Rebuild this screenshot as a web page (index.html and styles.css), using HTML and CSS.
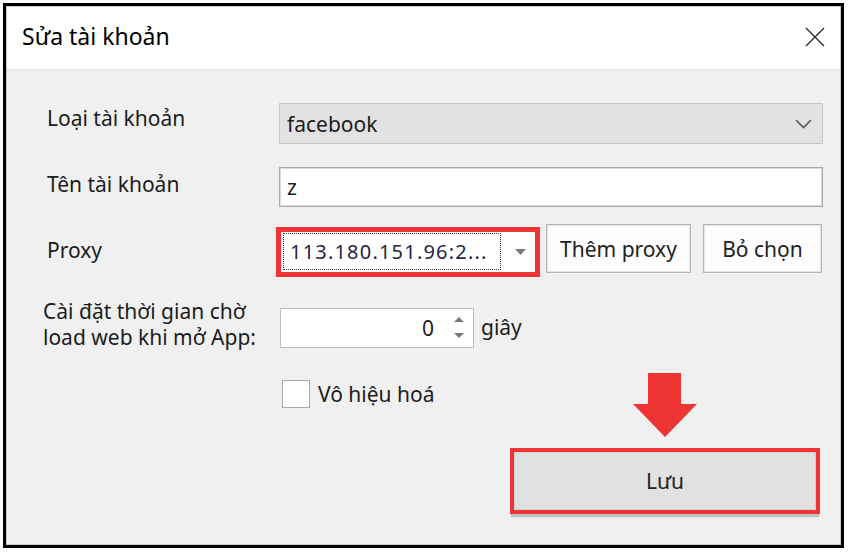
FILE: index.html
```html
<!DOCTYPE html>
<html lang="vi">

<head>
    <meta charset="UTF-8">
    <meta name="viewport" content="width=device-width, initial-scale=1.0">
    <title>Sửa tài khoản</title>
    <link rel="stylesheet" href="styles.css">
</head>

<body>
    <div class="frame">
        <div class="window">
            <div class="titlebar">
                <span class="title">Sửa tài khoản</span>
                <svg class="close" width="20" height="20" viewBox="0 0 20 20">
                    <path d="M1 1L19 19M19 1L1 19" stroke="#2b2b2b" stroke-width="1.4" fill="none" />
                </svg>
            </div>
            <div class="content">
                <div class="row row-type">
                    <span class="label label-type">Loại tài khoản</span>
                    <div class="combo">
                        <span>facebook</span>
                        <svg class="chevron" width="17" height="10" viewBox="0 0 17 10">
                            <path d="M1 1L8.5 8.5L16 1" stroke="#5a5a5a" stroke-width="1.6" fill="none" />
                        </svg>
                    </div>
                </div>
                <div class="row row-name">
                    <span class="label label-name">Tên tài khoản</span>
                    <div class="textbox">z</div>
                </div>
                <div class="row row-proxy">
                    <span class="label label-proxy">Proxy</span>
                    <div class="proxy-tools">
                        <div class="proxy-mark">
                            <div class="proxy-combo">
                                <span class="focus">113.180.151.96:2...</span>
                                <svg class="drop" width="11" height="6" viewBox="0 0 11 6">
                                    <path d="M0 0H11L5.5 6Z" fill="#7a7a7a" />
                                </svg>
                            </div>
                        </div>
                        <button class="btn btn-add">Thêm proxy</button>
                        <button class="btn btn-clear">Bỏ chọn</button>
                    </div>
                </div>
                <div class="row row-wait">
                    <span class="label label-wait">Cài đặt thời gian chờ<br>load web khi mở App:</span>
                    <div class="wait">
                        <div class="spin">
                            <span class="spin-value">0</span>
                            <svg class="spin-btns" width="12" height="24" viewBox="0 0 12 24">
                                <path d="M1 6L6 1L11 6Z" fill="#7a7a7a" />
                                <path d="M1 17L6 22L11 17Z" fill="#7a7a7a" />
                            </svg>
                        </div>
                        <span class="unit">giây</span>
                    </div>
                </div>
                <div class="bottom">
                    <div class="check">
                        <span class="box"></span>
                        <span>Vô hiệu hoá</span>
                    </div>
                    <div class="save-col">
                        <svg class="arrow" width="64" height="65" viewBox="0 0 64 65">
                            <polygon points="15,0 48,0 48,31 64,31 32,64 0,31 15,31" fill="#ef3434" />
                        </svg>
                        <div class="save-mark">
                            <button class="btn-save">Lưu</button>
                        </div>
                    </div>
                </div>
            </div>
        </div>
    </div>
</body>

</html>
```

FILE: styles.css
```css
body {
    margin: 0;
    padding: 0;
    background-color: #fff;
    font-family: "Noto Sans", "Open Sans", sans-serif;
    color: #1c1c1c;
}

.frame {
    margin: 3px 0 0 3px;
    width: 841px;
    height: 545px;
    box-sizing: border-box;
    border: 3px solid #000;
}

.window {
    height: 100%;
    box-sizing: border-box;
    border: 1px solid #c9c9c9;
    display: flex;
    flex-direction: column;
}

.titlebar {
    height: 62px;
    background-color: #fff;
    border-bottom: 1px solid #e3e3e3;
    display: flex;
    align-items: center;
    justify-content: space-between;
    padding: 0 15px 0 15px;
}

.title {
    font-size: 23px;
    color: #000;
    margin-top: -4px;
}

.close {
    display: block;
    margin-top: -2px;
}

.content {
    flex: 1;
    background-color: #f0f0f0;
    padding: 33px 17px 0 40px;
}

.row {
    display: grid;
    grid-template-columns: 232px 1fr;
    align-items: start;
}

.label {
    font-size: 21px;
    line-height: 25px;
}

.label-type {
    margin-top: 3px;
}

.label-name {
    margin-top: 5px;
}

.row-name {
    margin-top: 23px;
}

.row-proxy {
    margin-top: 17px;
}

.row-wait {
    margin-top: 22px;
}

.combo {
    height: 41px;
    box-sizing: border-box;
    background-color: #e2e2e2;
    border: 1px solid #c6c6c6;
    display: flex;
    align-items: center;
    justify-content: space-between;
    padding: 0 10px 0 7px;
    font-size: 21px;
}

.chevron {
    display: block;
}

.textbox {
    height: 40px;
    box-sizing: border-box;
    background-color: #fff;
    border: 1px solid #a9a9a9;
    box-shadow: inset 0 0 0 1px #dadada;
    padding: 0 7px;
    font-size: 21px;
    line-height: 38px;
}

.label-proxy {
    margin-top: 14px;
}

.proxy-tools {
    display: flex;
    align-items: flex-start;
}

.proxy-mark {
    margin: 3px 0 0 -3px;
    border: 5px solid #ee3434;
}

.proxy-combo {
    width: 254px;
    height: 40px;
    box-sizing: border-box;
    background-color: #fff;
    display: flex;
    align-items: center;
    padding: 1px 0 2px 2px;
}

.focus {
    width: 218px;
    height: 37px;
    box-sizing: border-box;
    border: 1px dotted #3a3a3a;
    padding-left: 6px;
    font-size: 20px;
    letter-spacing: 1.2px;
    line-height: 35px;
    white-space: nowrap;
    overflow: hidden;
    color: #262640;
}

.drop {
    display: block;
    margin-left: 14px;
}

.btn {
    height: 49px;
    box-sizing: border-box;
    background-color: #fdfdfd;
    border: 1px solid #b6b6b6;
    box-shadow: inset 0 0 0 1px #e4e4e4;
    font-family: "Noto Sans", "Open Sans", sans-serif;
    font-size: 21px;
    color: #222;
    padding: 0;
}

.btn-add {
    width: 145px;
    margin-left: 6px;
}

.btn-clear {
    width: 119px;
    margin-left: 12px;
}

.label-wait {
    margin-left: -4px;
    line-height: 25.5px;
}

.wait {
    display: flex;
    align-items: center;
    margin-top: 9px;
    margin-left: 1px;
}

.spin {
    width: 194px;
    height: 40px;
    box-sizing: border-box;
    background-color: #fff;
    border: 1px solid #bdbdbd;
    display: flex;
    align-items: center;
    justify-content: flex-end;
    padding-right: 8px;
    font-size: 21px;
}

.spin-value {
    margin-right: 19px;
}

.spin-btns {
    display: block;
}

.unit {
    font-size: 21px;
    margin-left: 7px;
    margin-top: -3px;
}

.bottom {
    display: flex;
    justify-content: space-between;
    align-items: flex-start;
    margin-top: 23px;
    margin-left: 235px;
    padding-right: 3px;
}

.check {
    display: flex;
    align-items: center;
    margin-top: 7px;
    font-size: 21px;
}

.box {
    width: 28px;
    height: 28px;
    box-sizing: border-box;
    background-color: #fff;
    border: 1px solid #a8a8a8;
    margin-right: 8px;
}

.save-col {
    display: flex;
    flex-direction: column;
    align-items: center;
}

.arrow {
    display: block;
    margin-bottom: 10px;
}

.save-mark {
    border: 4px solid #ee3434;
    box-shadow: 0 4px 1px -1px rgba(0, 0, 0, 0.2);
}

.btn-save {
    display: block;
    width: 302px;
    height: 58px;
    background-color: #e1e1e1;
    border: 1px solid #d0d0d0;
    font-family: "Noto Sans", "Open Sans", sans-serif;
    font-size: 21px;
    color: #222;
    padding: 0;
}
```
